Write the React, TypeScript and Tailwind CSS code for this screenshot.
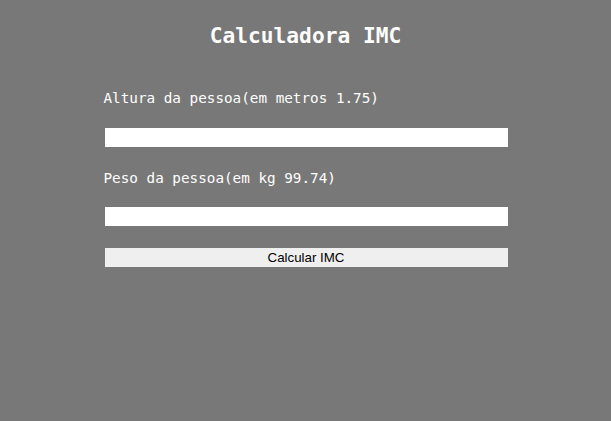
export default function App() {
  return (
    <div className="min-h-[421px] bg-[#787878] pt-[24px] font-['DejaVu_Sans_Mono',monospace] text-white">
      <h1 className="text-center text-[21.2px] font-bold leading-[24px]">Calculadora IMC</h1>
      <form className="mx-auto mt-[41px] flex w-[404px] flex-col" onSubmit={(e) => e.preventDefault()}>
        <label className="text-[14.3px] leading-[18px]">Altura da pessoa(em metros 1.75)</label>
        <input type="text" className="ml-[1px] mt-[21px] h-[19px] w-[403px] bg-white text-black outline-none" />
        <label className="mt-[22px] text-[14.3px] leading-[18px]">Peso da pessoa(em kg 99.74)</label>
        <input type="text" className="ml-[1px] mt-[20px] h-[19px] w-[403px] bg-white text-black outline-none" />
        <button
          type="submit"
          className="ml-[1px] mt-[22px] h-[19px] w-[403px] bg-[#efefef] font-['Liberation_Sans',Arial,sans-serif] text-[13.3px] leading-[19px] text-black"
        >
          Calcular IMC
        </button>
      </form>
    </div>
  );
}
